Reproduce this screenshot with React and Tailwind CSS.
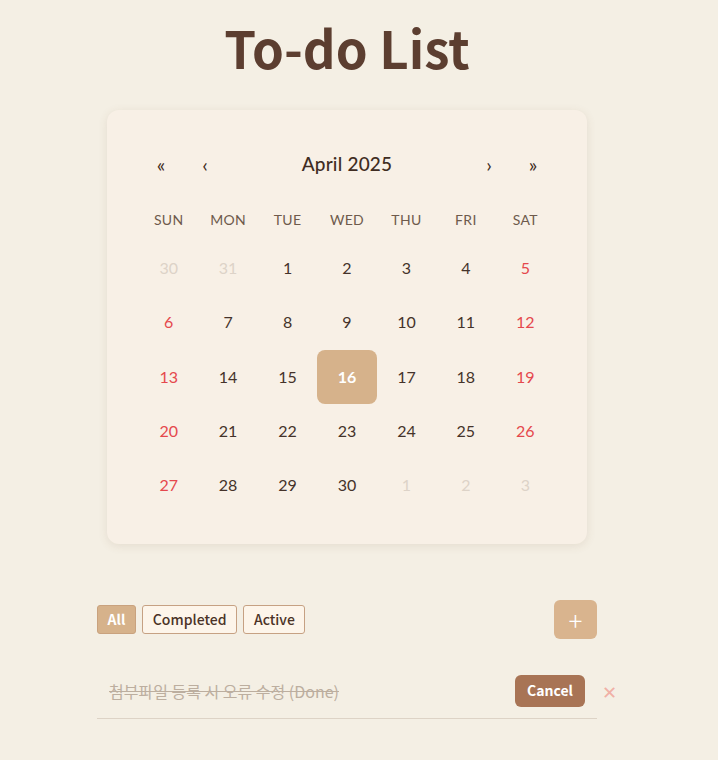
import React, { useState } from 'react';

const days = [
  { d: 30, muted: true }, { d: 31, muted: true }, { d: 1 }, { d: 2 }, { d: 3 }, { d: 4 }, { d: 5 },
  { d: 6 }, { d: 7 }, { d: 8 }, { d: 9 }, { d: 10 }, { d: 11 }, { d: 12 },
  { d: 13 }, { d: 14 }, { d: 15 }, { d: 16, selected: true }, { d: 17 }, { d: 18 }, { d: 19 },
  { d: 20 }, { d: 21 }, { d: 22 }, { d: 23 }, { d: 24 }, { d: 25 }, { d: 26 },
  { d: 27 }, { d: 28 }, { d: 29 }, { d: 30 }, { d: 1, muted: true }, { d: 2, muted: true }, { d: 3, muted: true },
];

const weekdays = ['SUN', 'MON', 'TUE', 'WED', 'THU', 'FRI', 'SAT'];

const Calendar = () => {
  return (
    <div className="mx-auto w-[480px] rounded-xl bg-[#f8f0e6] p-8 shadow-[0_2px_10px_rgba(120,90,60,0.12)] font-['Lato',sans-serif]">
      {/* Navigation */}
      <div className="flex h-[44px] items-center mb-[11px] text-[#3f2c22]">
        <button className="w-[44px] h-full text-[20px] leading-none">«</button>
        <button className="w-[44px] h-full text-[20px] leading-none">‹</button>
        <div className="flex-1 text-center text-[19px] font-medium tracking-[0.2px]">April 2025</div>
        <button className="w-[44px] h-full text-[20px] leading-none">›</button>
        <button className="w-[44px] h-full text-[20px] leading-none">»</button>
      </div>

      {/* Weekdays */}
      <div className="grid grid-cols-7 h-[44px] items-center text-center text-[14px] text-[#6e5a4c] tracking-[0.3px]">
        {weekdays.map((w) => (
          <div key={w}>{w}</div>
        ))}
      </div>

      {/* Days */}
      <div className="grid grid-cols-7">
        {days.map((day, i) => {
          const col = i % 7;
          let color = 'text-[#45332a]';
          if (day.muted) color = 'text-[#ddd3c8]';
          else if (col === 0 || col === 6) color = 'text-[#e5484d]';
          if (day.selected) {
            return (
              <div key={i} className="flex h-[54.3px] items-center justify-center rounded-lg bg-[#d6b28b] text-[16px] font-bold text-white">
                {day.d}
              </div>
            );
          }
          return (
            <div key={i} className={`flex h-[54.3px] items-center justify-center text-[16px] ${color}`}>
              {day.d}
            </div>
          );
        })}
      </div>
    </div>
  );
};

const TodoItem = ({ text }) => (
  <div className="relative flex h-[56px] items-center border-b border-[#ddd3c6] pl-3 pr-3">
    <span className="flex-1 text-[16px] text-[#bcae9f] line-through">{text}</span>
    <button className="h-[32px] rounded-md bg-[#a87455] px-3 text-[14px] font-bold text-white">Cancel</button>
    <button className="absolute right-[-20px] text-[18px] leading-none text-[#f0b0a6]">✕</button>
  </div>
);

export default function App() {
  const [filter, setFilter] = useState('All');
  const filters = ['All', 'Completed', 'Active'];

  return (
    <div className="min-h-[760px] bg-[#f4efe4] pt-[14px] font-['Noto_Sans_CJK_KR','Noto_Sans',sans-serif]">
      <div className="ml-[97px] w-[500px]">
        <h1 className="text-center text-[51px] font-bold leading-[66px] text-[#5c3e30]">To-do List</h1>

        <div className="mt-[30px]">
          <Calendar />
        </div>

        {/* Filters */}
        <div className="mt-[56px] flex items-center justify-between">
          <div className="flex gap-[6.5px]">
            {filters.map((f) => (
              <button
                key={f}
                onClick={() => setFilter(f)}
                className={
                  filter === f
                    ? 'h-[29px] rounded-[3px] border border-[#c9a27e] bg-[#d6b28b] px-[9.5px] text-[14px] font-bold text-white'
                    : 'h-[29px] rounded-[3px] border border-[#c6a183] bg-[#fdf5ea] px-[9.5px] text-[14px] font-medium text-[#4b3327]'
                }
              >
                {f}
              </button>
            ))}
          </div>
          <button className="flex h-[39px] w-[43px] items-center justify-center rounded-md bg-[#d9b48e] text-[26px] font-light leading-none text-white">
            +
          </button>
        </div>

        <div className="mt-[24px]">
          <TodoItem text="첨부파일 등록 시 오류 수정 (Done)" />
        </div>
      </div>
    </div>
  );
}
